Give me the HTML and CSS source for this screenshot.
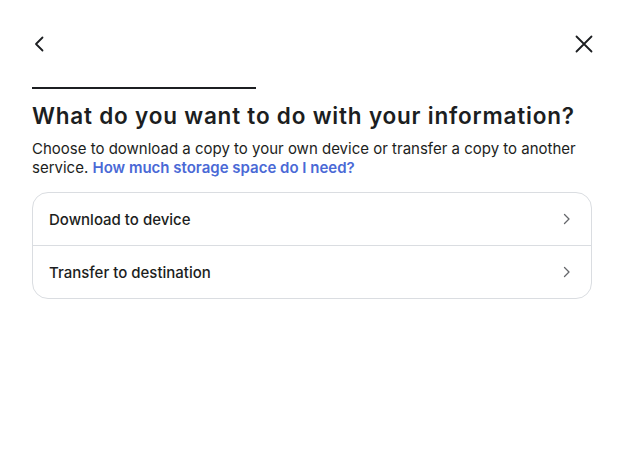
FILE: index.html
```html
<!DOCTYPE html>
<html>
<head>
<meta charset="utf-8">
<link rel="stylesheet" href="styles.css">
</head>
<body>
<div class="page">
  <div class="topbar">
    <button class="icon-btn" aria-label="Back">
      <svg width="24" height="24" viewBox="0 0 24 24"><path d="M14.5 5.5 L8 12 L14.5 18.5" fill="none" stroke="#1c1e21" stroke-width="1.8" stroke-linecap="round" stroke-linejoin="round"/></svg>
    </button>
    <button class="icon-btn" aria-label="Close">
      <svg width="24" height="24" viewBox="0 0 24 24"><path d="M4.5 4.5 L19.5 19.5 M19.5 4.5 L4.5 19.5" fill="none" stroke="#1c1e21" stroke-width="1.8" stroke-linecap="round"/></svg>
    </button>
  </div>
  <div class="progress"><div class="progress-fill"></div></div>
  <h1 class="title">What do you want to do with your information?</h1>
  <p class="desc">Choose to download a copy to your own device or transfer a copy to another service. <a class="link" href="#">How much storage space do I need?</a></p>
  <div class="card">
    <div class="row">
      <span class="row-label">Download to device</span>
      <svg class="chev" width="12" height="12" viewBox="0 0 12 12"><path d="M3.5 1.5 L8 6 L3.5 10.5" fill="none" stroke="#65676b" stroke-width="1.3" stroke-linecap="round" stroke-linejoin="round"/></svg>
    </div>
    <div class="row">
      <span class="row-label">Transfer to destination</span>
      <svg class="chev" width="12" height="12" viewBox="0 0 12 12"><path d="M3.5 1.5 L8 6 L3.5 10.5" fill="none" stroke="#65676b" stroke-width="1.3" stroke-linecap="round" stroke-linejoin="round"/></svg>
    </div>
  </div>
</div>
</body>
</html>
```
FILE: styles.css
```css
html, body {
  margin: 0;
  padding: 0;
  background: #ffffff;
}
body {
  font-family: Inter, "Noto Sans", sans-serif;
  color: #1c1e21;
}
.page {
  padding: 32px 40px 0 32px;
}
.topbar {
  display: flex;
  justify-content: space-between;
  align-items: center;
  height: 24px;
}
.icon-btn {
  background: none;
  border: 0;
  padding: 0;
  width: 24px;
  height: 24px;
  display: flex;
  align-items: center;
  justify-content: center;
  cursor: pointer;
}
.icon-btn:first-child {
  margin-left: -4px;
}
.icon-btn:last-child {
  margin-right: -4px;
}
.progress {
  margin-top: 31px;
  height: 2px;
  width: 224px;
  background: #1c1e21;
}
.title {
  margin: 13px 0 0 0;
  font-size: 22.5px;
  font-weight: 600;
  line-height: 28px;
  letter-spacing: 0.8px;
  white-space: nowrap;
}
.desc {
  margin: 9px 0 0 0;
  font-size: 15px;
  line-height: 19px;
}
.link {
  color: #4a69d6;
  font-weight: 600;
  text-decoration: none;
}
.card {
  margin-top: 15px;
  border: 1px solid #dadde1;
  border-radius: 16px;
  overflow: hidden;
}
.row {
  display: flex;
  align-items: center;
  justify-content: space-between;
  height: 52px;
  padding: 0 18px 0 16px;
}
.row + .row {
  border-top: 1px solid #dadde1;
}
.row-label {
  font-size: 15px;
  font-weight: 500;
}
```
